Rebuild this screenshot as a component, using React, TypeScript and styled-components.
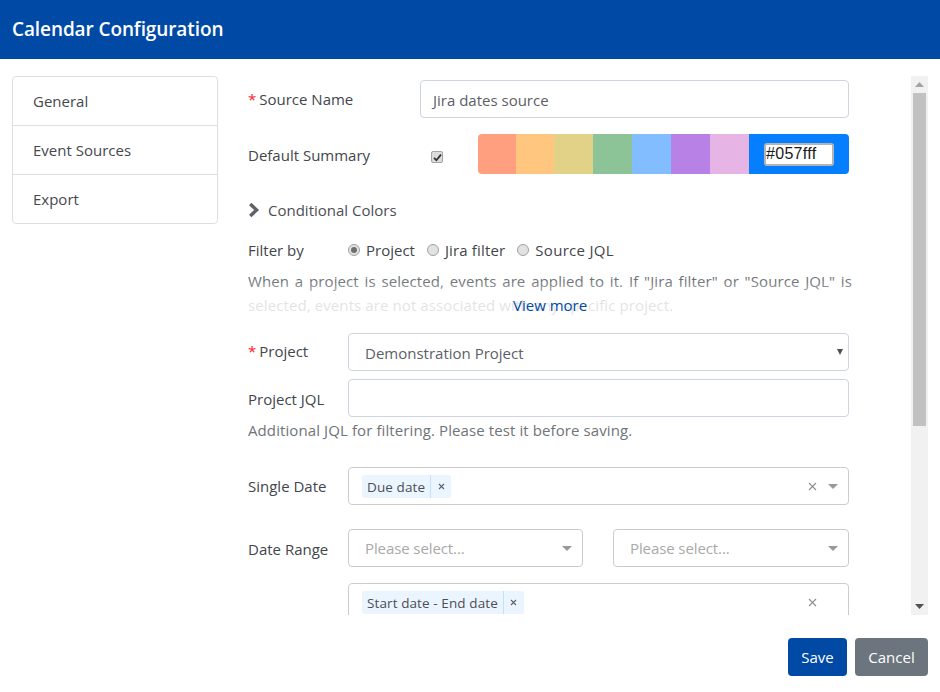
import React from "react";
import styled, { createGlobalStyle } from "styled-components";

const Global = createGlobalStyle`
  html, body { margin: 0; padding: 0; background: #fff; }
  body { font-family: "Open Sans", "Noto Sans", sans-serif; color: #42464b; }
  * { box-sizing: border-box; }
`;

const Page = styled.div`
  width: 940px;
  height: 692px;
  display: flex;
  flex-direction: column;
  overflow: hidden;
`;
const Header = styled.header`
  height: 59px;
  flex: none;
  background: #004aa5;
  display: flex;
  align-items: center;
  padding-left: 12px;
`;
const Title = styled.h1`
  margin: 0;
  color: #fff;
  font-size: 19px;
  font-weight: 600;
  letter-spacing: -0.1px;
  position: relative;
  top: -1px;
`;
const Body = styled.div`
  height: 556px;
  flex: none;
  display: flex;
  padding: 17px 12px 0;
`;
const Side = styled.nav`
  width: 206px;
  height: 148px;
  flex: none;
  border: 1px solid #dcdee2;
  border-radius: 4px;
  display: flex;
  flex-direction: column;
`;
const SideItem = styled.div`
  height: 48px;
  flex: none;
  display: flex;
  align-items: center;
  padding-left: 20px;
  font-size: 15px;
  color: #45494e;
  & + & { border-top: 1px solid #dcdee2; height: 49px; }
`;
const Scroller = styled.div`
  width: 663px;
  margin-left: 30px;
  height: 539px;
  padding-top: 4px;
  overflow: hidden;
  flex: none;
`;
const Form = styled.div`
  width: 601px;
  display: flex;
  flex-direction: column;
`;
const Row = styled.div<{ $mt?: number }>`
  display: flex;
  align-items: center;
  margin-top: ${(p) => p.$mt ?? 0}px;
  min-height: 24px;
`;
const Label = styled.label<{ $w?: number; $dy?: number }>`
  width: ${(p) => p.$w ?? 100}px;
  flex: none;
  font-size: 15px;
  color: #42464b;
  position: relative;
  top: ${(p) => p.$dy ?? -1}px;
  white-space: nowrap;
`;
const Req = styled.span`
  color: #f5222d;
  margin-right: 3px;
`;
const TextInput = styled.div`
  flex: 1;
  height: 38px;
  border: 1px solid #ced4e0;
  border-radius: 4px;
  display: flex;
  align-items: center;
  padding: 2px 0 0 12px;
  font-size: 15px;
  color: #5c6066;
`;
const NativeSelect = styled(TextInput)`
  padding-left: 16px;
  position: relative;
`;
const SmallCaret = styled.span`
  position: absolute;
  right: 5px;
  top: 15px;
  width: 0;
  height: 0;
  border-left: 3.5px solid transparent;
  border-right: 3.5px solid transparent;
  border-top: 6px solid #4b4f55;
`;
const CheckBox = styled.span`
  width: 12px;
  height: 12px;
  flex: none;
  border: 1px solid #a5a5a5;
  border-radius: 2px;
  background: #dcdcdc;
  margin-left: 11px;
  display: flex;
  align-items: center;
  justify-content: center;
  position: relative;
  top: 3px;
`;
const Swatches = styled.div`
  margin-left: 35px;
  width: 371px;
  height: 40px;
  display: flex;
  border-radius: 4px;
  overflow: hidden;
`;
const Swatch = styled.div<{ $c: string; $w: number }>`
  width: ${(p) => p.$w}px;
  flex: none;
  background: ${(p) => p.$c};
`;
const ColorCell = styled.div`
  flex: 1;
  background: #057fff;
  display: flex;
  align-items: center;
  justify-content: center;
`;
const ColorInput = styled.div`
  width: 70px;
  height: 23px;
  background: #fff;
  border: 2px solid #b4b4b4;
  border-radius: 3px;
  font-family: "Liberation Sans", Arial, sans-serif;
  font-size: 16px;
  letter-spacing: 0.3px;
  color: #1a1a1a;
  line-height: 18px;
  white-space: nowrap;
  overflow: hidden;
`;
const Collapse = styled.div`
  display: flex;
  align-items: center;
  margin-top: 24px;
  height: 24px;
  font-size: 15px;
  color: #4b4f54;
  gap: 8px;
`;
const FilterRow = styled(Row)`
  margin-top: 16px;
`;
const RadioGroup = styled.div`
  display: flex;
  align-items: center;
  font-size: 15px;
`;
const RadioItem = styled.span<{ $ls?: number }>`
  display: flex;
  align-items: center;
  margin-right: 12px;
  color: #42464b;
  letter-spacing: ${(p) => p.$ls ?? 0}px;
`;
const Radio = styled.span<{ $on?: boolean }>`
  width: 12px;
  height: 12px;
  border-radius: 50%;
  border: 1px solid #a0a0a0;
  background: #e2e2e2;
  margin-right: 6px;
  display: flex;
  align-items: center;
  justify-content: center;
  &::after {
    content: "";
    display: ${(p) => (p.$on ? "block" : "none")};
    width: 6px;
    height: 6px;
    border-radius: 50%;
    background: #6e6e6e;
  }
`;
const HelpWrap = styled.div`
  position: relative;
  width: 604px;
  height: 48px;
  margin-top: 7px;
  overflow: hidden;
`;
const Help = styled.p`
  margin: 0;
  font-size: 15px;
  line-height: 24px;
  color: #6f7479;
  text-align: justify;
  letter-spacing: 0.1px;
`;
const Fade = styled.div`
  position: absolute;
  left: 0;
  right: 0;
  top: 12px;
  bottom: 0;
  background: linear-gradient(to bottom, rgba(255,255,255,0), rgba(255,255,255,0.8) 60%);
`;
const More = styled.a`
  position: absolute;
  left: 265px;
  top: 24px;
  font-size: 15px;
  line-height: 24px;
  color: #004aa5;
`;
const HelpLine = styled.div`
  font-size: 15px;
  line-height: 24px;
  color: #6f7479;
  margin-top: 1px;
  margin-bottom: 1px;
  letter-spacing: 0.1px;
`;
const Picker = styled.div<{ $w?: number }>`
  flex: ${(p) => (p.$w ? `0 0 ${p.$w}px` : "1")};
  min-width: 0;
  height: 38px;
  border: 1px solid #cccccc;
  border-radius: 4px;
  display: flex;
  align-items: center;
  padding: 0 8px 0 13px;
  font-size: 15px;
`;
const Tag = styled.div`
  display: flex;
  align-items: stretch;
  height: 23px;
  background: #ebf5ff;
  border-radius: 2px;
  font-size: 13.5px;
  letter-spacing: 0.1px;
  color: #4b4f54;
`;
const TagText = styled.span`
  padding: 1px 5px 0;
  display: flex;
  align-items: center;
  border-right: 1px solid #c2e0ff;
`;
const TagX = styled.span`
  width: 20px;
  display: flex;
  align-items: center;
  justify-content: center;
`;
const Grow = styled.div`
  flex: 1;
`;
const Placeholder = styled.span`
  flex: 1;
  padding-left: 3px;
  color: #a9a9a9;
  letter-spacing: -0.1px;
`;
const Caret = styled.span`
  width: 0;
  height: 0;
  margin: 0 2px 0 8px;
  border-left: 5px solid transparent;
  border-right: 5px solid transparent;
  border-top: 5px solid #999;
`;
const Clear = styled.span`
  display: flex;
  align-items: center;
  margin-right: 3px;
`;
const RangeFields = styled.div`
  flex: 1;
  display: flex;
  gap: 30px;
`;
const Indent = styled.div`
  margin-left: 100px;
  margin-top: 16px;
`;
const ClearSpacer = styled.span`
  width: 20px;
`;
const Scrollbar = styled.div`
  width: 17px;
  flex: none;
  height: 539px;
  background: #f1f1f1;
  display: flex;
  flex-direction: column;
  align-items: stretch;
`;
const ScrollBtn = styled.div`
  height: 17px;
  flex: none;
  display: flex;
  align-items: center;
  justify-content: center;
`;
const Thumb = styled.div`
  height: 333px;
  flex: none;
  background: #c1c1c1;
  margin: 0 2px;
`;
const Footer = styled.footer`
  flex: 1;
  display: flex;
  justify-content: flex-end;
  align-items: flex-start;
  gap: 8px;
  padding: 23px 12px 0 0;
`;
const Button = styled.button<{ $kind: "primary" | "muted" }>`
  height: 38px;
  border: none;
  border-radius: 4px;
  padding: 0;
  width: ${(p) => (p.$kind === "primary" ? 59 : 73)}px;
  font-family: inherit;
  font-size: 15px;
  color: #fff;
  background: ${(p) => (p.$kind === "primary" ? "#004aa5" : "#6c757d")};
`;

const X = () => (
  <svg width="9" height="9" viewBox="0 0 9 9" aria-hidden="true">
    <path d="M1 1l7 7M8 1L1 8" stroke="#8e8e8e" strokeWidth="1.1" fill="none" />
  </svg>
);
const TinyX = () => (
  <svg width="7" height="7" viewBox="0 0 7 7" aria-hidden="true">
    <path d="M1 1l5 5M6 1L1 6" stroke="#5d6166" strokeWidth="1.1" fill="none" />
  </svg>
);

const colors: [string, number][] = [
  ["#ff9f80", 38],
  ["#ffc680", 38],
  ["#e2d287", 39],
  ["#8cc497", 39],
  ["#82bdff", 39],
  ["#b881e6", 39],
  ["#e6b5e6", 39],
];

export default function App() {
  return (
    <Page>
      <Global />
      <Header>
        <Title>Calendar Configuration</Title>
      </Header>
      <Body>
        <Side>
          <SideItem>General</SideItem>
          <SideItem>Event Sources</SideItem>
          <SideItem>Export</SideItem>
        </Side>
        <Scroller>
          <Form>
            <Row>
              <Label $w={172} $dy={0}><Req>*</Req>Source Name</Label>
              <TextInput>Jira dates source</TextInput>
            </Row>
            <Row $mt={16}>
              <Label $w={172} $dy={1}>Default Summary</Label>
              <CheckBox>
                <svg width="9" height="9" viewBox="0 0 9 9" aria-hidden="true">
                  <path d="M1 4.8l2.4 2.4L8 1.6" stroke="#333" strokeWidth="1.8" fill="none" />
                </svg>
              </CheckBox>
              <Swatches>
                {colors.map(([c, w]) => (
                  <Swatch key={c} $c={c} $w={w} />
                ))}
                <ColorCell>
                  <ColorInput>#057fff</ColorInput>
                </ColorCell>
              </Swatches>
            </Row>
            <Collapse>
              <svg width="12" height="16" viewBox="0 0 12 16" aria-hidden="true">
                <path d="M2.2 2L8.6 8l-6.4 6" stroke="#5f6368" strokeWidth="3.4" fill="none" />
              </svg>
              Conditional Colors
            </Collapse>
            <FilterRow>
              <Label $dy={0}>Filter by</Label>
              <RadioGroup>
                <RadioItem><Radio $on />Project</RadioItem>
                <RadioItem $ls={0.15}><Radio />Jira filter</RadioItem>
                <RadioItem $ls={0.3}><Radio />Source JQL</RadioItem>
              </RadioGroup>
            </FilterRow>
            <HelpWrap>
              <Help>
                When a project is selected, events are applied to it. If "Jira filter" or "Source JQL" is selected, events are not associated with any specific project.
              </Help>
              <Fade />
              <More>View more</More>
            </HelpWrap>
            <Row $mt={16}>
              <Label><Req>*</Req>Project</Label>
              <NativeSelect>
                Demonstration Project
                <SmallCaret />
              </NativeSelect>
            </Row>
            <Row $mt={8}>
              <Label $dy={1}>Project JQL</Label>
              <TextInput />
            </Row>
            <HelpLine>Additional JQL for filtering. Please test it before saving.</HelpLine>
            <Row $mt={24}>
              <Label $dy={0}>Single Date</Label>
              <Picker>
                <Tag>
                  <TagText>Due date</TagText>
                  <TagX><TinyX /></TagX>
                </Tag>
                <Grow />
                <Clear><X /></Clear>
                <Caret />
              </Picker>
            </Row>
            <Row $mt={24}>
              <Label $dy={1}>Date Range</Label>
              <RangeFields>
                <Picker $w={235}>
                  <Placeholder>Please select...</Placeholder>
                  <Caret />
                </Picker>
                <Picker>
                  <Placeholder>Please select...</Placeholder>
                  <Caret />
                </Picker>
              </RangeFields>
            </Row>
            <Indent>
              <Picker>
                <Tag>
                  <TagText>Start date - End date</TagText>
                  <TagX><TinyX /></TagX>
                </Tag>
                <Grow />
                <Clear><X /></Clear>
                <ClearSpacer />
              </Picker>
            </Indent>
          </Form>
        </Scroller>
        <Scrollbar>
          <ScrollBtn>
            <svg width="9" height="6" viewBox="0 0 9 6" aria-hidden="true"><path d="M4.5 0L9 5H0z" fill="#a3a3a3" /></svg>
          </ScrollBtn>
          <Thumb />
          <Grow />
          <ScrollBtn>
            <svg width="9" height="6" viewBox="0 0 9 6" aria-hidden="true"><path d="M4.5 5L9 0H0z" fill="#505050" /></svg>
          </ScrollBtn>
        </Scrollbar>
      </Body>
      <Footer>
        <Button $kind="primary">Save</Button>
        <Button $kind="muted">Cancel</Button>
      </Footer>
    </Page>
  );
}
